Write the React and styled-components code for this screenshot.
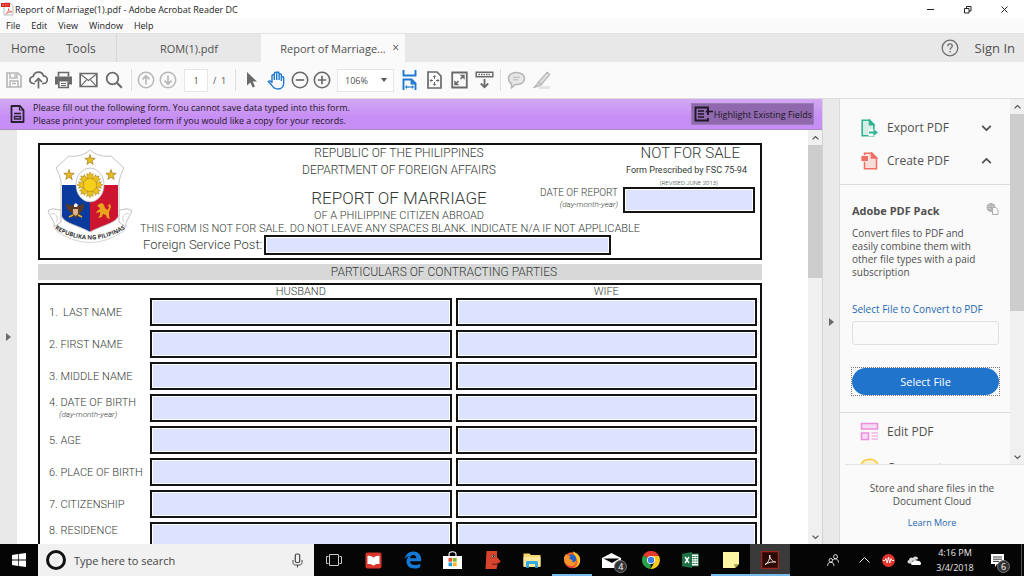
import React, { useState } from "react";
import styled, { createGlobalStyle } from "styled-components";

const GlobalStyle = createGlobalStyle`
  * {
    box-sizing: border-box;
  }
  body {
    margin: 0;
    overflow: hidden;
    font-family: "Open Sans", "Noto Sans", sans-serif;
    color: #505050;
  }
  button, input, select {
    font: inherit;
    color: inherit;
    margin: 0;
    padding: 0;
    border: 0;
    background: none;
    border-radius: 0;
  }
  a {
    text-decoration: none;
  }
`;

const FIELDS = [
  { key: "last", label: "1.  LAST NAME" },
  { key: "first", label: "2. FIRST NAME" },
  { key: "middle", label: "3. MIDDLE NAME" },
  { key: "birth", label: "4. DATE OF BIRTH", hint: "(day-month-year)" },
  { key: "age", label: "5. AGE" },
  { key: "place", label: "6. PLACE OF BIRTH" },
  { key: "citizen", label: "7. CITIZENSHIP" },
  { key: "residence", label: "8. RESIDENCE", top: true },
];

// Icons //
const Icon = ({ size = 20, w, h, box, children }) => (
  <svg
    width={w || size}
    height={h || size}
    viewBox={box || `0 0 ${w || size} ${h || size}`}
    fill="none"
    stroke="currentColor"
    strokeWidth="1.5"
    aria-hidden="true"
  >
    {children}
  </svg>
);

const PdfFileIcon = () => (
  <Icon w={13} h={14}>
    <path d="M3 1h6l3 3v9H3z" fill="#fff" stroke="#b9b9b9" strokeWidth="1" />
    <path d="M0 1h9v4H0z" fill="#e2231a" stroke="none" />
    <path d="M1.500 3h6" stroke="#f6a7a2" strokeWidth="1.200" strokeDasharray="1.500 1" />
    <path d="M5 12c2-2 3-4 2.500-5.500C7 8 9 10 11 10 9 9.500 6.500 10.500 5 12z" stroke="#e2574c" strokeWidth=".8" />
  </Icon>
);

const SaveIcon = () => (
  <Icon size={18}>
    <path d="M2 2h11l3 3v11H2z" strokeWidth="1.700" />
    <path d="M5 2v5h7V2M10 3v3M5 16v-6h8v6M7 12.500h4" />
  </Icon>
);

const CloudUpIcon = () => (
  <Icon w={19} h={18}>
    <path d="M6 12.500H4.500a3.500 3.500 0 0 1-.3-7 5.300 5.300 0 0 1 10.300-.6 3.800 3.800 0 0 1 0 7.600H13" strokeWidth="1.700" />
    <path d="M9.500 17.500V8M6 11l3.500-3.500L13 11" strokeWidth="1.700" />
  </Icon>
);

const PrintIcon = () => (
  <Icon w={19} h={18}>
    <path d="M4.500 5.500V1.500h10v4" strokeWidth="1.700" />
    <path d="M1 5.500h17v8h-3v-3H4v3H1z" fill="currentColor" stroke="none" />
    <path d="M4.800 10.500v6h9.400v-6" strokeWidth="1.700" />
    <path d="M7 12.500h5M7 14.500h5" strokeWidth="1" />
  </Icon>
);

const MailIcon = () => (
  <Icon w={19} h={16}>
    <path d="M1.200 1.500h16.600v13H1.200z" strokeWidth="1.700" />
    <path d="M2 2.500l7.500 6 7.500-6M2 13.800l5.500-6M17 13.800l-5.500-6" strokeWidth="1.100" />
  </Icon>
);

const SearchIcon = () => (
  <Icon size={18}>
    <circle cx="7.500" cy="7.500" r="5.800" strokeWidth="1.800" />
    <path d="M11.800 11.800l5 5" strokeWidth="2.200" />
  </Icon>
);

const ArrowCircleIcon = ({ down }) => (
  <Icon size={18}>
    <circle cx="9" cy="9" r="7.700" />
    {down ? (
      <path d="M9 4.500v8.500M5.500 9.700L9 13.200l3.500-3.500" strokeWidth="1.700" />
    ) : (
      <path d="M9 13.500V5M5.500 8.300L9 4.800l3.500 3.500" strokeWidth="1.700" />
    )}
  </Icon>
);

const PointerIcon = () => (
  <Icon w={12} h={18}>
    <path d="M1 1v13.500l3.400-3 2.200 5 2.300-1-2.200-4.900H11z" fill="currentColor" stroke="none" />
  </Icon>
);

const HandIcon = () => (
  <Icon w={19} h={19}>
    <path
      d="M5 12V4.500a1.200 1.200 0 0 1 2.300 0V9M7.300 9V2.500a1.200 1.200 0 0 1 2.400 0V9M9.700 9V2.200a1.200 1.200 0 0 1 2.400 0V9M12.100 9V3.800a1.200 1.200 0 0 1 2.300 0V10M14.400 10V6.600a1.200 1.200 0 0 1 2.300 0V12c0 3.600-2.300 6-5.700 6-3 0-4.500-1-6-3.500L1.300 10.600c.8-1.200 2.300-.9 3.700 1"
      strokeLinejoin="round"
      strokeWidth="1.400"
    />
  </Icon>
);

const ZoomCircleIcon = ({ plus }) => (
  <Icon size={18}>
    <circle cx="9" cy="9" r="7.700" strokeWidth="1.600" />
    <path d={plus ? "M4.800 9h8.400M9 4.800v8.400" : "M4.800 9h8.400"} strokeWidth="1.700" />
  </Icon>
);

const FitWidthIcon = () => (
  <Icon w={15} h={20}>
    <path d="M1.500 0v5.500h12V0M1.500 20V9.500h8l4 4V20M9.500 10v3.500h4" strokeWidth="1.900" />
    <path d="M4 17h7" strokeWidth="1.200" />
    <path d="M3 17l2-2v4zM12 17l-2-2v4z" fill="currentColor" stroke="none" />
  </Icon>
);

const FitPageIcon = () => (
  <Icon w={15} h={18}>
    <path d="M1 1h9l4 4v12H1z" strokeWidth="1.700" />
    <path d="M7.500 5v3M7.500 11v3M3.500 9.500h2.500M9 9.500h2.500" strokeWidth="1" />
    <path d="M7.500 4l1.700 2H5.800zM7.500 15l1.700-2H5.800zM2.500 9.500l2-1.700v3.400zM12.500 9.500l-2-1.700v3.400z" fill="currentColor" stroke="none" />
  </Icon>
);

const FullScreenIcon = () => (
  <Icon w={17} h={18}>
    <path d="M1.200 1.500h14.600v15H1.200z" strokeWidth="1.800" />
    <path d="M9.500 8l3-3M7.500 10l-3 3" strokeWidth="1.600" />
    <path d="M8.700 3.800h5v5zM3.300 14.200h5l-5-5z" fill="currentColor" stroke="none" />
  </Icon>
);

const ReadModeIcon = () => (
  <Icon w={19} h={18}>
    <path d="M1.200 1.200h16.600v4.600H1.200z" strokeWidth="1.500" />
    <path d="M3.500 3.500h12" strokeWidth="1.600" strokeDasharray="1.500 1" />
    <path d="M9.500 8v8M5.800 12.500l3.700 3.700 3.700-3.700" strokeWidth="1.800" />
  </Icon>
);

const CommentIcon = () => (
  <Icon w={19} h={18}>
    <path d="M9.500 1.500c4.800 0 8 2.600 8 6s-3.200 6-8 6h-1l-4 3.200v-4C2.600 11.600 1.500 9.700 1.500 7.500c0-3.400 3.200-6 8-6z" strokeWidth="1.600" fill="#e6e6e6" />
    <path d="M6 6.200h7M6 8.800h5" strokeWidth="1" />
  </Icon>
);

const HighlighterIcon = () => (
  <Icon w={19} h={18}>
    <path d="M7 16.500h11" stroke="#e4e4e4" strokeWidth="3" />
    <path d="M15 1.300l2.700 2.200-8.200 10-3-2.500zM6.500 11l3 2.500-3.500 1.700-1.500-1.200zM1.500 16.800L4.500 14l1.500 1.300z" fill="#dedede" strokeWidth="1.200" />
  </Icon>
);

const FormDocIcon = () => (
  <Icon w={15} h={18}>
    <path d="M1.500 1h8.500l3.500 4v12h-12z" strokeWidth="1.800" strokeLinejoin="round" />
    <path d="M4 8.500h7" strokeWidth="1.600" />
    <path d="M4.500 11.500h6v2.500h-6z" strokeWidth="1.300" />
    <path d="M9.500 1.500V5h4" strokeWidth="1.200" />
  </Icon>
);

const FieldsIcon = () => (
  <Icon w={20} h={16}>
    <path d="M14 4V1.500H1.500v13H14V12M14 9V7" strokeWidth="1.800" />
    <path d="M4 5h6M4 8h6M4 11h6" strokeWidth="1.500" />
    <path d="M13 5.500h6" strokeWidth="1.500" />
    <path d="M11.500 5.500l3.500-3v6z" fill="currentColor" stroke="none" />
  </Icon>
);

const ExportPdfIcon = () => (
  <Icon w={17} h={18}>
    <path d="M1.200 1.200h7.300l4.300 4.300v11.300H1.200z" fill="#d5ede6" stroke="#2fb394" strokeWidth="1.600" />
    <path d="M8.500 1v4.800H13z" fill="#2fb394" stroke="#2fb394" />
    <path d="M7.500 10.500H17v6.500H7.500z" fill="#fafafa" stroke="none" />
    <path d="M8 13.500h6" stroke="#2fb394" strokeWidth="2" />
    <path d="M12.500 10l4.500 3.500-4.500 3.500z" fill="#2fb394" stroke="none" />
  </Icon>
);

const CreatePdfIcon = () => (
  <Icon w={17} h={18}>
    <path d="M3.500 1.200h7.500l4.500 4.500v11.100H3.500z" fill="#f7dedb" stroke="#ee6e63" strokeWidth="1.500" />
    <path d="M10.500 1v5H15.500z" fill="#ee6e63" stroke="#ee6e63" />
    <path d="M0 3.500h7.500v6H0z" fill="#ee6e63" stroke="#fafafa" strokeWidth=".8" />
  </Icon>
);

const EditPdfIcon = () => (
  <Icon size={19}>
    <path d="M1.500 1.500h16v5.500h-16zM1.500 11h7v6.500h-7z" fill="#f7dcf3" stroke="#ec8fdf" strokeWidth="1.600" />
    <path d="M11.500 11h6.500M11.500 14h6.500M11.500 17h6.500" stroke="#ec8fdf" strokeWidth="1" />
  </Icon>
);

const CommentToolIcon = () => (
  <Icon size={19}>
    <path d="M9.500 1.200c5 0 8.300 3 8.300 6.800s-3.300 6.800-8.300 6.800l-4.500 3.500v-4.500C2.700 12.600 1.200 10.500 1.200 8c0-3.800 3.300-6.800 8.300-6.800z" fill="#fdf0cc" stroke="#fbc94a" strokeWidth="1.600" />
    <path d="M5.500 6.500h8M5.500 9.500h6" stroke="#fbc94a" strokeWidth="1.200" />
  </Icon>
);

const CloudFilesIcon = () => (
  <Icon w={13} h={12}>
    <circle cx="5" cy="4.500" r="4" fill="#cfcfcf" stroke="#ababab" strokeWidth="1" />
    <path d="M1 4.500h8M5 .5v8M2 2.300h6M2 6.700h6" stroke="#a4a4a4" strokeWidth=".7" />
    <path d="M6.500 4.500h3.200l2.300 2.300v4.700H6.500z" fill="#fafafa" stroke="#ababab" strokeWidth="1" />
  </Icon>
);

const HelpIcon = () => (
  <Icon size={18}>
    <circle cx="9" cy="9" r="7.800" stroke="#6e6e6e" strokeWidth="1.300" />
    <path d="M6.800 7.200c0-1.600 1-2.300 2.200-2.300s2.300.8 2.300 2.100c0 1.600-2.200 1.800-2.200 3.700M9.100 12v1.500" stroke="#6e6e6e" strokeWidth="1.300" />
  </Icon>
);

const Chevron = ({ up, w = 11 }) => (
  <Icon w={w} h={6} box="0 0 12 7">
    <path d={up ? "M1 6l5-5 5 5" : "M1 1l5 5 5-5"} strokeWidth="2" />
  </Icon>
);

const Triangle = () => (
  <Icon w={5} h={8}>
    <path d="M0 0l5 4-5 4z" fill="#6a6a6a" stroke="none" />
  </Icon>
);

const star = (cx, cy, r) => {
  const pts = [];
  for (let i = 0; i < 10; i++) {
    const a = (Math.PI / 5) * i - Math.PI / 2;
    const d = i % 2 ? r * 0.4 : r;
    pts.push(`${cx + d * Math.cos(a)},${cy + d * Math.sin(a)}`);
  }
  return pts.join(" ");
};

const CoatOfArms = () => (
  <svg width="86" height="96" viewBox="0 0 86 96" role="img" aria-label="Seal">
    <defs>
      <clipPath id="shield">
        <path d="M43 1c-6 5-13 7-21 6L9 19c2 4 4 8 5 14v31c0 10 14 11 29 19 15-8 29-9 29-19V33c1-6 3-10 5-14L64 7C56 8 49 6 43 1z" />
      </clipPath>
      <path id="ribbon" d="M5 78Q43 103 81 78" />
    </defs>
    <path d="M1 62c5-4 8-1 13-1v12L7 78c1-5-2-7-6-16zM85 62c-5-4-8-1-13-1v12l7 5c-1-5 2-7 6-16z" fill="#fff" stroke="#bdbdbd" />
    <path d="M4 65c5-2 8 4 5 8M82 65c-5-2-8 4-5 8" fill="none" stroke="#cfcfcf" />
    <g clipPath="url(#shield)">
      <path d="M0 0h86v94H0z" fill="#fff" />
      <path d="M15 36h28v50H15z" fill="#0a3a9c" />
      <path d="M43 36h28v50H43z" fill="#ce1530" />
    </g>
    <path d="M43 1c-6 5-13 7-21 6L9 19c2 4 4 8 5 14v31c0 10 14 11 29 19 15-8 29-9 29-19V33c1-6 3-10 5-14L64 7C56 8 49 6 43 1z" fill="none" stroke="#c4c4c4" />
    <ellipse cx="43" cy="36" rx="14" ry="17" fill="#fff" stroke="#a8adb8" strokeWidth=".7" />
    {[0, 45, 90, 135, 180, 225, 270, 315].map((a) => (
      <path
        key={a}
        transform={`rotate(${a} 43 36)`}
        d="M40.500 30l-.8-5.500 2 1.200L43 23l1.300 2.700 2-1.200-.8 5.500z"
        fill="#ecc018"
        stroke="#9c7a18"
        strokeWidth=".5"
      />
    ))}
    <circle cx="43" cy="36" r="6.500" fill="#f8d01c" stroke="#a8861c" strokeWidth=".5" />
    <polygon points={star(43, 11, 5.500)} fill="#eabb1c" stroke="#8a6a1c" strokeWidth=".6" />
    <polygon points={star(22, 26, 5.500)} fill="#eabb1c" stroke="#8a6a1c" strokeWidth=".6" />
    <polygon points={star(64, 26, 5.500)} fill="#eabb1c" stroke="#8a6a1c" strokeWidth=".6" />
    <path d="M19 54c3 2 5 3 7 2 2-1 4-1 5 0 2 1 4 0 6-2 0 5-1 8-4 10l1 4-3-1-2 3-2-3-3 1 1-4c-4-2-6-5-6-10z" fill="#5a3a24" />
    <path d="M26 60h5v5l-2.500 2-2.500-2z" fill="#d8b58a" />
    <path d="M27 55.500l2-1.500 2 2-1 2h-3z" fill="#f2f2f2" />
    <path d="M22 68l4-2M35 68l-4-2" stroke="#e0b22a" strokeWidth="1.500" />
    <path d="M50 57l2-2 3-1 2 2 1 3 2 2 2-2-1-3 2-1 1 3-2 5v4l1 3-3-1-1-3-3-1-1 3-4 1 2-3v-3l-4 1 1-2 3-2-1-2z" fill="#e9a41c" />
    <text fontFamily="Open Sans" fontSize="6" fontWeight="700" fill="#333" textAnchor="middle">
      <textPath href="#ribbon" startOffset="50%">
        REPUBLIKA NG PILIPINAS
      </textPath>
    </text>
    <path d="M9 82Q43 105 77 82" fill="none" stroke="#d6d6d6" />
  </svg>
);

// Taskbar drawings //
const WindowsLogo = () => (
  <Icon size={14}>
    <path d="M0 2l6-.9V6.600H0zM6.700 1L14 0v6.600H6.700zM0 7.400h6v5.500L0 12zM6.700 7.400H14V14l-7.300-1z" fill="#fff" stroke="none" />
  </Icon>
);

const MicIcon = () => (
  <Icon w={11} h={15}>
    <rect x="3.300" y="1" width="4.400" height="8.500" rx="1.500" strokeWidth="1.200" />
    <path d="M1 7v2.500c0 1.500 1 2.500 2.500 2.500h4C9 12 10 11 10 9.500V7M5.500 12v2.500" strokeWidth="1" />
  </Icon>
);

const TaskViewIcon = () => (
  <Icon w={16} h={12}>
    <path d="M3.500.5h9v11h-9zM2.500 2.500h-2v7h2M13.500 2.500h2v7h-2" stroke="#c9c9c9" strokeWidth="1" />
  </Icon>
);

const BookIcon = () => (
  <Icon size={17}>
    <rect x=".5" y=".5" width="16" height="16" rx="2" fill="#d9352c" stroke="none" />
    <path d="M2.500 4c2.500-.6 4.500 0 6 1.800C10 4 12 3.400 14.500 4v8c-2.500-.4-4.500.2-6 1.700C7 12.200 5 11.600 2.500 12z" fill="#fff" stroke="none" />
  </Icon>
);

const EdgeIcon = () => (
  <Icon size={18}>
    <path d="M.8 8C1.500 3.500 4.500.5 9.200.5c5 0 8 3.500 8 8v1.700H6c.2 2.300 2 3.800 5 3.800 2 0 3.700-.5 5.200-1.500v3.700C14.600 17 12.800 17.500 10.500 17.500c-5 0-8-2.800-8-7 0-2.300 1-4.300 3-5.500C3.500 5.500 2 6.300.8 8zM6 7.300h6.300c0-2-1-3.300-3-3.300S6.200 5.300 6 7.300z" fill="#1479d4" fillRule="evenodd" stroke="none" />
  </Icon>
);

const StoreIcon = () => (
  <Icon w={19} h={18}>
    <path d="M6 5V3.500C6 1.800 7.500.8 9.500.8S13 1.800 13 3.500V5" stroke="#fff" strokeWidth="1.100" />
    <path d="M0 5h19v13H0z" fill="#fff" stroke="none" />
    <path d="M5.500 7h3.700v3.700H5.500z" fill="#e8502a" stroke="none" />
    <path d="M10 7h3.700v3.700H10z" fill="#7db82c" stroke="none" />
    <path d="M5.500 11.500h3.700v3.700H5.500z" fill="#1ea0e0" stroke="none" />
    <path d="M10 11.500h3.700v3.700H10z" fill="#f7b51c" stroke="none" />
  </Icon>
);

const FaceIcon = () => (
  <Icon w={16} h={18}>
    <path d="M1.500 0H12v6l3.800 4.500-3.300 2.500v.5L11.500 18H.5z" fill="#d8442b" stroke="none" />
    <path d="M7 13c2 .5 4.500.3 6-.5" stroke="#2c1511" strokeWidth=".8" />
    <path d="M6 5.500c1-1.500 3-1.800 4.500-.5-1 1.500-3 1.800-4.500.5z" fill="#fff" stroke="#2c1511" strokeWidth=".6" />
    <circle cx="8.500" cy="5.200" r=".8" fill="#111" stroke="none" />
  </Icon>
);

const FolderIcon = () => (
  <Icon w={18} h={15}>
    <path d="M.5.500h6L8 2h9.500v12H.5z" fill="#f6d673" stroke="none" />
    <path d="M.5 4h17v9H.5z" fill="#fde79b" stroke="none" />
    <path d="M3 14.800V9.500C3 8.600 3.600 8 4.500 8h9c.9 0 1.500.6 1.500 1.500v5.300h-3V11H6v3.800z" fill="#3aa9e0" stroke="none" />
  </Icon>
);

const FirefoxIcon = () => (
  <Icon size={18}>
    <circle cx="9" cy="9.200" r="8" fill="#f1602a" stroke="none" />
    <path d="M10 .5c5 2 8 5 7 10.500-.7 3.800-4 6.200-8 6.200 4-1 6-3.500 5.500-7C14 7 11 5 10 .5z" fill="#fdc52c" stroke="none" />
    <circle cx="8.800" cy="8" r="4.500" fill="#2560c8" stroke="none" />
    <path d="M1 6l2-3 1.500 1.500L7.500 5 6 7.500l3.500 1.700C8 11.500 12 12 13 9.500c0 4-2.500 5.500-5 5.500-4.500 0-7-4-7-9z" fill="#f9952a" stroke="none" />
    <path d="M2 11c1.500 4 6 6 10 4-2 3-7.500 3-10-4z" fill="#e3284e" stroke="none" />
  </Icon>
);

const InboxIcon = () => (
  <Icon w={19} h={15}>
    <path d="M9.500 0L19 5v10H0V5z" fill="#fff" stroke="none" />
    <path d="M1.500 5.500h16l-7.500 4.500z" fill="#050505" stroke="none" />
  </Icon>
);

const ChromeIcon = () => (
  <Icon size={18}>
    <path d="M9 9L1.200 4.500A9 9 0 0 1 16.800 4.500z" fill="#e33b2e" stroke="none" />
    <path d="M9 9l-7.800-4.500A9 9 0 0 0 8.500 18z" fill="#2aa24b" stroke="none" />
    <path d="M9 5h8A9 9 0 0 1 8.500 18l4-7z" fill="#fbc91c" stroke="none" />
    <circle cx="9" cy="9" r="4" fill="#fff" stroke="none" />
    <circle cx="9" cy="9" r="3.200" fill="#3d7de8" stroke="none" />
  </Icon>
);

const ExcelIcon = () => (
  <Icon w={17} h={16}>
    <path d="M9 2h7.500v12H9z" fill="#fff" stroke="#1d7044" strokeWidth="1" />
    <path d="M10.500 4.500h5M10.500 6.700h5M10.500 9h5M10.500 11.500h5" stroke="#1d7044" strokeWidth="1.200" strokeDasharray="2.200 .7" />
    <path d="M0 1.800L10 0v16L0 14.200z" fill="#1d7044" stroke="none" />
    <path d="M3 5l4 6M7 5l-4 6" stroke="#fff" strokeWidth="1.400" />
  </Icon>
);

const NoteIcon = () => (
  <Icon size={16}>
    <path d="M0 0h16v12l-4 4H0z" fill="#fbf5a4" stroke="none" />
    <path d="M16 12h-5l1 4z" fill="#b8ae4c" stroke="none" />
  </Icon>
);

const AcrobatIcon = () => (
  <Icon size={18}>
    <path d="M.7.700h16.600v16.600H.7z" fill="#2a0806" stroke="#a3241b" strokeWidth="1.300" />
    <path d="M4 13.500c3-1.500 5-5 4.700-9.500.3 4 3 7 6 7-3.500-.5-7 .3-10.700 2.500z" stroke="#f3e6e4" strokeWidth="1" />
  </Icon>
);

const PeopleIcon = () => (
  <Icon w={12} h={12}>
    <circle cx="8.500" cy="2.700" r="2" strokeWidth="1" />
    <circle cx="3.800" cy="6.300" r="1.800" strokeWidth="1" />
    <path d="M.6 11.800c.2-2.400 1.300-3.500 3.200-3.500s3 1.100 3.200 3.500M6.500 5.500c2.800-1.300 4.800-.2 5 3" strokeWidth="1" />
  </Icon>
);

const PulseIcon = () => (
  <Icon size={13}>
    <circle cx="6.500" cy="6.500" r="6.500" fill="#e4362e" stroke="none" />
    <path d="M1 6.500h2L4 4.500l1.200 4.500 1.300-6 1.300 6L9 4.500l1 2h2" stroke="#fff" strokeWidth=".9" />
  </Icon>
);

const OneDriveIcon = () => (
  <Icon w={14} h={9}>
    <path d="M2 7.500C0 7 0 4.500 2 4c0-2 2.200-3 3.800-2C7.500-.5 11 0 11.200 3L6 4.500 4 7.500z" fill="#d9d9d9" stroke="none" />
    <path d="M5 9C3.500 8.500 3.800 6 5.500 6c.5-2 3-2.800 4.500-1.200 2-.5 4 1 4 2.600 0 1-.8 1.600-1.500 1.600z" fill="#fff" stroke="none" />
  </Icon>
);

const ActionCenterIcon = () => (
  <Icon w={13} h={13}>
    <path d="M0 0h13v10H6l-2 3v-3H0z" fill="#fff" stroke="none" />
    <path d="M2 3h9M2 5.200h9M2 7.400h6" stroke="#222" strokeWidth=".9" />
  </Icon>
);

const TASKS = [
  { name: "Task View", icon: <TaskViewIcon /> },
  { name: "Reader", icon: <BookIcon /> },
  { name: "Edge", icon: <EdgeIcon /> },
  { name: "Store", icon: <StoreIcon /> },
  { name: "Face", icon: <FaceIcon /> },
  { name: "Explorer", icon: <FolderIcon /> },
  { name: "Firefox", icon: <FirefoxIcon />, open: true },
  { name: "Mail", icon: <InboxIcon />, count: 4 },
  { name: "Chrome", icon: <ChromeIcon /> },
  { name: "Excel", icon: <ExcelIcon /> },
  { name: "Sticky Notes", icon: <NoteIcon />, open: true },
  { name: "Acrobat", icon: <AcrobatIcon />, open: true, active: true },
];

const TopChrome = () => (
  <header>
    <TitleBar>
      <PdfFileIcon />
      <Title>Report of Marriage(1).pdf - Adobe Acrobat Reader DC</Title>
      <WindowButton aria-label="Minimize">
        <Icon size={9}>
          <path d="M1 4.500h7" strokeWidth="1" />
        </Icon>
      </WindowButton>
      <WindowButton aria-label="Restore">
        <Icon size={9}>
          <path d="M1.500 3.500h4.500v4.500h-4.500zM3.500 3.500V1.500h4.500v4.500H6" strokeWidth="1" />
        </Icon>
      </WindowButton>
      <WindowButton aria-label="Close">
        <Icon size={9}>
          <path d="M1.500 1.500l6 6M7.500 1.500l-6 6" strokeWidth="1" />
        </Icon>
      </WindowButton>
    </TitleBar>
    <MenuBar>
      {["File", "Edit", "View", "Window", "Help"].map((item) => (
        <MenuItem key={item}>{item}</MenuItem>
      ))}
    </MenuBar>
    <TabBar>
      <HomeTabs>
        <PlainTab>Home</PlainTab>
        <PlainTab>Tools</PlainTab>
      </HomeTabs>
      <FileTab>ROM(1).pdf</FileTab>
      <FileTab $active>
        Report of Marriage...
        <CloseMark>×</CloseMark>
      </FileTab>
      <Account>
        <HelpIcon />
        <PlainTab $large>Sign In</PlainTab>
      </Account>
    </TabBar>
  </header>
);

const Toolbar = () => (
  <ToolbarStyling>
    <ToolGroup $first>
      <Tool $off aria-label="Save"><SaveIcon /></Tool>
      <Tool aria-label="Upload"><CloudUpIcon /></Tool>
      <Tool aria-label="Print"><PrintIcon /></Tool>
      <Tool aria-label="Email"><MailIcon /></Tool>
      <Tool aria-label="Find"><SearchIcon /></Tool>
    </ToolGroup>
    <ToolGroup>
      <Tool $small $off aria-label="Previous page"><ArrowCircleIcon /></Tool>
      <Tool $small $off aria-label="Next page"><ArrowCircleIcon down /></Tool>
      <PageInput aria-label="Page" defaultValue="1" />
      <PageTotal>/&nbsp; 1</PageTotal>
    </ToolGroup>
    <ToolGroup>
      <Tool aria-label="Select"><PointerIcon /></Tool>
      <Tool $on aria-label="Pan"><HandIcon /></Tool>
      <Tool $small aria-label="Zoom out"><ZoomCircleIcon /></Tool>
      <Tool $small aria-label="Zoom in"><ZoomCircleIcon plus /></Tool>
      <ZoomBox>
        <ZoomSelect aria-label="Zoom level" defaultValue="106%">
          <option>106%</option>
        </ZoomSelect>
        <Icon w={6} h={4}>
          <path d="M0 0h6L3 4z" fill="#555" stroke="none" />
        </Icon>
      </ZoomBox>
      <Tool $on aria-label="Fit width"><FitWidthIcon /></Tool>
      <Tool aria-label="Fit page"><FitPageIcon /></Tool>
      <Tool aria-label="Full screen"><FullScreenIcon /></Tool>
      <Tool aria-label="Read mode"><ReadModeIcon /></Tool>
    </ToolGroup>
    <ToolGroup>
      <Tool $off aria-label="Comment"><CommentIcon /></Tool>
      <Tool $off aria-label="Highlight"><HighlighterIcon /></Tool>
    </ToolGroup>
  </ToolbarStyling>
);

const Scrollbar = ({ thumb }) => (
  <ScrollTrack>
    <ScrollButton aria-label="Scroll up"><Chevron up w={7} /></ScrollButton>
    <ScrollThumb $height={thumb} />
    <ScrollButton aria-label="Scroll down"><Chevron w={7} /></ScrollButton>
  </ScrollTrack>
);

const FormHeader = () => (
  <HeaderBox>
    <Seal>
      <CoatOfArms />
    </Seal>
    <Heading>
      <Line>REPUBLIC OF THE PHILIPPINES</Line>
      <Line>DEPARTMENT OF FOREIGN AFFAIRS</Line>
      <FormTitle>REPORT OF MARRIAGE</FormTitle>
      <SubTitle>OF A PHILIPPINE CITIZEN ABROAD</SubTitle>
    </Heading>
    <Issue>
      <NotForSale>NOT FOR SALE</NotForSale>
      <Prescribed>Form Prescribed by FSC 75-94</Prescribed>
      <Revised>(REVISED JUNE 2013)</Revised>
      <ReportDate>
        <ReportLabel htmlFor="report-date">
          DATE OF REPORT
          <Hint>(day-month-year)</Hint>
        </ReportLabel>
        <FormInput id="report-date" $height={26} />
      </ReportDate>
    </Issue>
    <Notice>
      THIS FORM IS NOT FOR SALE. DO NOT LEAVE ANY SPACES BLANK. INDICATE N/A IF
      NOT APPLICABLE
    </Notice>
    <PostRow>
      <label htmlFor="post">Foreign Service Post:</label>
      <FormInput id="post" $height={20} />
    </PostRow>
  </HeaderBox>
);

const Parties = () => {
  const [values, setValues] = useState({});
  const update = (id) => (e) => setValues({ ...values, [id]: e.target.value });

  return (
    <PartiesBox>
      <PartyRow $head>
        <span />
        <PartyHead>HUSBAND</PartyHead>
        <PartyHead>WIFE</PartyHead>
      </PartyRow>
      {FIELDS.map(({ key, label, hint, top }) => (
        <PartyRow key={key}>
          <FieldLabel htmlFor={`husband-${key}`} $top={top}>
            {label}
            {hint && <Hint $indent>{hint}</Hint>}
          </FieldLabel>
          {["husband", "wife"].map((who) => (
            <FormInput
              key={who}
              id={`${who}-${key}`}
              aria-label={`${who} ${label}`}
              $height={28}
              value={values[`${who}-${key}`] || ""}
              onChange={update(`${who}-${key}`)}
            />
          ))}
        </PartyRow>
      ))}
    </PartiesBox>
  );
};

const ToolsPane = () => (
  <Pane>
    <PaneScroll>
      <PaneContent>
        <ToolList>
          <ToolRow>
            <ToolIcon><ExportPdfIcon /></ToolIcon>
            <ToolName>Export PDF</ToolName>
            <Chevron />
          </ToolRow>
          <ToolRow>
            <ToolIcon><CreatePdfIcon /></ToolIcon>
            <ToolName>Create PDF</ToolName>
            <Chevron up />
          </ToolRow>
        </ToolList>
        <Pack>
          <PackTitle>
            Adobe PDF Pack
            <CloudFilesIcon />
          </PackTitle>
          <PackText>
            Convert files to PDF and easily combine them with other file types
            with a paid subscription
          </PackText>
          <PackLabel htmlFor="pack-file">Select File to Convert to PDF</PackLabel>
          <PackInput id="pack-file" />
          <FocusFrame>
            <SelectFile>Select File</SelectFile>
          </FocusFrame>
        </Pack>
        <ToolList $tight>
          <ToolRow>
            <ToolIcon><EditPdfIcon /></ToolIcon>
            <ToolName>Edit PDF</ToolName>
          </ToolRow>
          <ToolRow>
            <ToolIcon><CommentToolIcon /></ToolIcon>
            <ToolName>Comment</ToolName>
          </ToolRow>
        </ToolList>
      </PaneContent>
      <Scrollbar thumb={197} />
    </PaneScroll>
    <CloudNote>
      <p>Store and share files in the Document Cloud</p>
      <a href="#learn">Learn More</a>
    </CloudNote>
  </Pane>
);

const Taskbar = () => (
  <TaskbarStyling>
    <StartButton aria-label="Start"><WindowsLogo /></StartButton>
    <SearchBox>
      <Ring />
      <SearchInput aria-label="Search" placeholder="Type here to search" />
      <MicIcon />
    </SearchBox>
    <Tasks>
      {TASKS.map(({ name, icon, open, active, count }) => (
        <Task key={name} aria-label={name} $open={open} $active={active}>
          {icon}
          {count && <Badge $right={4}>{count}</Badge>}
        </Task>
      ))}
    </Tasks>
    <Tray>
      <People><PeopleIcon /></People>
      <Icon w={11} h={6}>
        <path d="M.5 5.500l5-5 5 5" strokeWidth="1" />
      </Icon>
      <PulseIcon />
      <OneDriveIcon />
      <Clock>
        <span>4:16 PM</span>
        <span>3/4/2018</span>
      </Clock>
      <Notices>
        <ActionCenterIcon />
        <Badge $right={11}>6</Badge>
      </Notices>
    </Tray>
  </TaskbarStyling>
);

const App = () => (
  <Screen>
    <GlobalStyle />
    <TopChrome />
    <Toolbar />
    <Workspace>
      <DocColumn>
        <MessageBar>
          <FormDocIcon />
          <Message>
            Please fill out the following form. You cannot save data typed into
            this form.
            <br />
            Please print your completed form if you would like a copy for your
            records.
          </Message>
          <HighlightButton>
            <FieldsIcon />
            Highlight Existing Fields
          </HighlightButton>
        </MessageBar>
        <DocArea>
          <Gutter><Triangle /></Gutter>
          <Paper>
            <FormHeader />
            <SectionBar>PARTICULARS OF CONTRACTING PARTIES</SectionBar>
            <Parties />
          </Paper>
          <Scrollbar thumb={133} />
        </DocArea>
      </DocColumn>
      <Splitter><Triangle /></Splitter>
      <ToolsPane />
    </Workspace>
    <Taskbar />
  </Screen>
);

export default App;

// Styles //
const Screen = styled.div`
  height: 100vh;
  display: flex;
  flex-direction: column;
  background: #fafafa;
`;

const TitleBar = styled.div`
  display: flex;
  align-items: center;
  height: 18px;
  padding: 0 1px;
  background: #fff;
  color: #222;
`;
const Title = styled.div`
  flex: 1;
  padding-left: 1px;
  font-size: 9px;
`;
const WindowButton = styled.button`
  display: flex;
  align-items: center;
  justify-content: center;
  width: 37px;
  height: 18px;
`;
const MenuBar = styled.nav`
  display: flex;
  gap: 11px;
  height: 16px;
  padding-left: 6px;
  border-bottom: 1px solid #e2e2e2;
`;
const MenuItem = styled.button`
  font-size: 9px;
  line-height: 15px;
  color: #222;
`;
const TabBar = styled.div`
  display: flex;
  height: 28px;
  background: #e8e8e8;
`;
const HomeTabs = styled.div`
  display: flex;
  gap: 21px;
  width: 117px;
  padding-left: 11px;
  border-right: 1px solid #d8d8d8;
`;
const PlainTab = styled.button`
  font-size: ${(props) => (props.$large ? 13 : 12)}px;
`;
const FileTab = styled.button`
  position: relative;
  width: 144px;
  font-size: 11px;
  background: ${(props) => (props.$active ? "#fafafa" : "none")};
`;
const CloseMark = styled.span`
  position: absolute;
  right: 6px;
  top: 6px;
  font-size: 12px;
  line-height: 15px;
`;
const Account = styled.div`
  display: flex;
  align-items: center;
  gap: 16px;
  margin-left: auto;
  padding-right: 9px;
`;

const ToolbarStyling = styled.div`
  display: flex;
  align-items: center;
  height: 37px;
  border-bottom: 1px solid #dcdcdc;
`;
const ToolGroup = styled.div`
  display: flex;
  align-items: center;
  height: 22px;
  padding: ${(props) => (props.$first ? "0 5px 0 1px" : "0 3px")};
  & + & {
    border-left: 1px solid #dedede;
  }
`;
const Tool = styled.button`
  display: flex;
  align-items: center;
  justify-content: center;
  width: ${(props) => (props.$small ? 22 : 25)}px;
  height: 22px;
  color: ${(props) => (props.$on ? "#1f79d0" : props.$off ? "#b8b8b8" : "#6a6a6a")};
`;
const PageInput = styled.input`
  width: 24px;
  height: 23px;
  margin: 0 5px;
  border: 1px solid #e6e6e6;
  background: #fff;
  font-size: 9px;
  text-align: center;
`;
const PageTotal = styled.span`
  width: 19px;
  font-size: 9px;
`;
const ZoomBox = styled.div`
  display: flex;
  align-items: center;
  width: 57px;
  height: 23px;
  margin: 0 3px 0 4px;
  padding-right: 6px;
  border: 1px solid #e6e6e6;
  background: #fff;
`;
const ZoomSelect = styled.select`
  flex: 1;
  min-width: 0;
  appearance: none;
  padding-left: 7px;
  font-size: 9px;
`;

const Workspace = styled.main`
  flex: 1;
  min-height: 0;
  display: flex;
`;
const DocColumn = styled.div`
  flex: 1;
  min-width: 0;
  display: flex;
  flex-direction: column;
  border-right: 1px solid #d4d4d4;
`;
const MessageBar = styled.div`
  display: flex;
  align-items: center;
  gap: 8px;
  height: 31px;
  padding: 0 8px 0 10px;
  background: linear-gradient(#d2a8f2, #c78ef5 60%);
  border-bottom: 1px solid #a98bc2;
  color: #2a2233;
`;
const Message = styled.p`
  flex: 1;
  margin: 0;
  font-size: 9px;
  line-height: 13px;
  color: #1d1624;
`;
const HighlightButton = styled.button`
  display: flex;
  align-items: center;
  height: 22px;
  padding: 0 1px 0 2px;
  border: 1px solid #9a7db5;
  background: #8f68ae;
  font-size: 9px;
  color: #1d1624;
  white-space: nowrap;
`;
const DocArea = styled.div`
  flex: 1;
  min-height: 0;
  display: flex;
  overflow: hidden;
`;
const Gutter = styled.div`
  display: flex;
  align-items: center;
  justify-content: center;
  width: 17px;
  background: #e9e9e9;
`;
const Splitter = styled(Gutter)`
  border-right: 1px solid #dadada;
`;
const ScrollTrack = styled.div`
  display: flex;
  flex-direction: column;
  width: 14px;
  background: #f0f0f0;
`;
const ScrollButton = styled.button`
  display: flex;
  align-items: center;
  justify-content: center;
  height: 15px;
  color: #505050;
  &:last-child {
    margin-top: auto;
  }
`;
const ScrollThumb = styled.div`
  height: ${(props) => props.$height}px;
  background: #cdcdcd;
`;

const Paper = styled.div`
  flex: 1;
  min-width: 0;
  padding: 13px 46px 0 21px;
  overflow: hidden;
  background: #fff;
  font-family: Roboto, "Liberation Sans", sans-serif;
  font-weight: 300;
  color: #333a35;
`;
const HeaderBox = styled.section`
  display: grid;
  grid-template-columns: 100px 119px 1fr 221px;
  padding-bottom: 3px;
  border: 2px solid #111;
`;
const Seal = styled.div`
  grid-row: 1 / span 3;
  padding: 4px 0 0 7px;
  height: 0;
`;
const Heading = styled.div`
  grid-column: 3;
  text-align: center;
  white-space: nowrap;
`;
const Line = styled.div`
  font-size: 12px;
  line-height: 17px;
`;
const FormTitle = styled.h1`
  margin: 8px 0 0;
  font-size: 17px;
  line-height: 22px;
  font-weight: 300;
`;
const SubTitle = styled.div`
  font-size: 11px;
  line-height: 13px;
`;
const Issue = styled.div`
  text-align: right;
`;
const NotForSale = styled.div`
  padding-right: 20px;
  font-size: 15px;
  line-height: 17px;
`;
const Prescribed = styled.div`
  padding-right: 13px;
  font-size: 9px;
  line-height: 17px;
  font-weight: 400;
`;
const Revised = styled.div`
  padding-right: 42px;
  font-size: 6px;
  line-height: 8px;
`;
const ReportDate = styled.div`
  display: grid;
  grid-template-columns: 1fr 132px;
  gap: 5px;
  padding-right: 5px;
`;
const ReportLabel = styled.label`
  font-size: 10px;
  line-height: 12px;
`;
const Hint = styled.span`
  display: block;
  padding-left: ${(props) => (props.$indent ? 10 : 0)}px;
  font-size: 8px;
  line-height: 11px;
  font-style: italic;
`;
const FormInput = styled.input`
  width: 100%;
  min-width: 0;
  height: ${(props) => props.$height}px;
  padding: 1px;
  border: 2px solid #141414;
  background: #dde3ff content-box;
  font-size: 12px;
`;
const Notice = styled.div`
  grid-column: 2 / -1;
  font-size: 11px;
  line-height: 13px;
  white-space: nowrap;
`;
const PostRow = styled.div`
  grid-column: 2 / -1;
  display: grid;
  grid-template-columns: 120px 1fr;
  align-items: center;
  gap: 1px;
  padding: 0 149px 0 3px;
  font-size: 13px;
  line-height: 16px;
  white-space: nowrap;
`;
const SectionBar = styled.h2`
  margin: 4px 0 3px;
  background: #d8d8d8;
  font-size: 12px;
  line-height: 16px;
  font-weight: 300;
  text-align: center;
  padding-left: 88px;
`;
const PartiesBox = styled.section`
  padding-right: 3px;
  border: 2px solid #111;
  border-bottom: 0;
`;
const PartyRow = styled.div`
  display: grid;
  grid-template-columns: 106px 1fr 1fr;
  gap: 4px;
  align-items: center;
  height: ${(props) => (props.$head ? 11 : 32)}px;
`;
const PartyHead = styled.div`
  font-size: 11px;
  line-height: 13px;
  text-align: center;
`;
const FieldLabel = styled.label`
  align-self: ${(props) => (props.$top ? "start" : "center")};
  padding: ${(props) => (props.$top ? 4 : 0)}px 0 0 9px;
  font-size: 11px;
  line-height: 13px;
  white-space: pre;
`;

const Pane = styled.aside`
  display: flex;
  flex-direction: column;
  width: 184px;
`;
const PaneScroll = styled.div`
  flex: 1;
  min-height: 0;
  display: flex;
  overflow: hidden;
`;
const PaneContent = styled.div`
  flex: 1;
`;
const ToolList = styled.div`
  display: flex;
  flex-direction: column;
  gap: ${(props) => (props.$tight ? 3 : 0)}px;
  padding: ${(props) => (props.$tight ? 2 : 12)}px 18px 7px 20px;
`;
const ToolRow = styled.button`
  display: flex;
  align-items: center;
  width: 100%;
  height: 33px;
`;
const ToolIcon = styled.span`
  display: flex;
  justify-content: center;
  width: 19px;
  margin-right: 8px;
`;
const ToolName = styled.span`
  flex: 1;
  font-size: 12px;
  text-align: left;
`;
const Pack = styled.section`
  padding: 18px 11px 17px 12px;
  border: 1px solid #dcdcdc;
  border-width: 1px 0;
`;
const PackTitle = styled.h3`
  display: flex;
  justify-content: space-between;
  margin: 0;
  font-size: 11px;
  line-height: 16px;
`;
const PackText = styled.p`
  width: 126px;
  margin: 8px 0 23px;
  font-size: 10px;
  line-height: 13px;
`;
const PackLabel = styled.label`
  display: block;
  font-size: 10px;
  line-height: 14px;
  color: #2468b0;
  white-space: nowrap;
`;
const PackInput = styled.input`
  width: 100%;
  height: 24px;
  margin: 5px 0 23px;
  border: 1px solid #e0e0e0;
  border-radius: 3px;
`;
const FocusFrame = styled.div`
  outline: 1px dotted #777;
`;
const SelectFile = styled.button`
  width: 100%;
  height: 27px;
  border-radius: 14px;
  background: #2074cc;
  color: #fff;
  font-size: 11px;
`;
const CloudNote = styled.footer`
  margin-left: 5px;
  padding: 17px 15px 15px 10px;
  border-top: 1px solid #e4e4e4;
  font-size: 9px;
  line-height: 13px;
  text-align: center;
  p {
    margin: 0 0 8px;
    font-size: 10px;
  }
  a {
    color: #2468b0;
  }
`;

const TaskbarStyling = styled.footer`
  display: flex;
  height: 32px;
  background: #050505;
  color: #e8e8e8;
`;
const StartButton = styled.button`
  display: flex;
  align-items: center;
  justify-content: center;
  width: 38px;
`;
const SearchBox = styled.div`
  display: flex;
  align-items: center;
  gap: 8px;
  width: 276px;
  padding: 0 11px 0 8px;
  background: #f1f1f1;
  color: #444;
`;
const Ring = styled.span`
  width: 20px;
  height: 20px;
  border: 3px solid #111;
  border-radius: 50%;
`;
const SearchInput = styled.input`
  flex: 1;
  min-width: 0;
  font-size: 11px;
  &::placeholder {
    color: #444;
    opacity: 1;
  }
`;
const Tasks = styled.div`
  display: flex;
  width: 476px;
`;
const Task = styled.button`
  position: relative;
  flex: 1;
  display: flex;
  align-items: center;
  justify-content: center;
  background: ${(props) => (props.$active ? "#3a3a3a" : "none")};
  box-shadow: ${(props) => (props.$open ? "inset 0 -2px #76b9ed" : "none")};
`;
const Badge = styled.span`
  position: absolute;
  right: ${(props) => props.$right}px;
  bottom: 3px;
  width: 13px;
  height: 13px;
  border: 1px solid #777;
  border-radius: 50%;
  background: #333;
  color: #fff;
  font-size: 9px;
  line-height: 11px;
  text-align: center;
`;
const Tray = styled.div`
  display: flex;
  align-items: center;
  gap: 12px;
  margin-left: auto;
  padding-right: 2px;
`;
const People = styled.span`
  display: flex;
  margin-right: 8px;
`;
const Clock = styled.div`
  display: flex;
  flex-direction: column;
  width: 44px;
  font-size: 9px;
  line-height: 15px;
  text-align: center;
`;
const Notices = styled.div`
  position: relative;
  display: flex;
  align-items: center;
  align-self: stretch;
  width: 33px;
  padding-left: 2px;
  border-right: 1px solid #555;
`;
